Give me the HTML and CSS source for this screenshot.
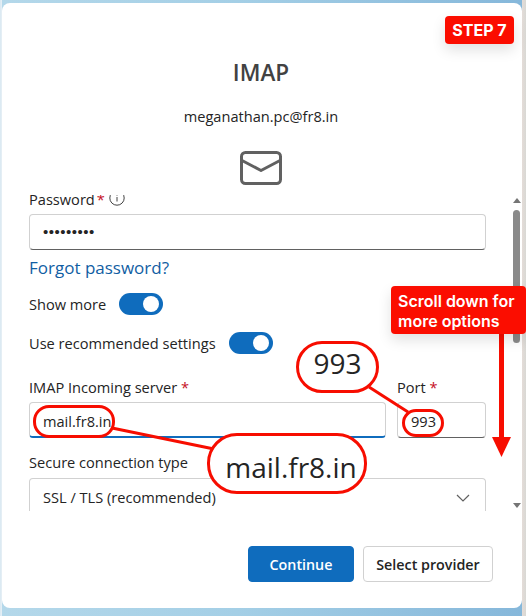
FILE: index.html
```html
<!DOCTYPE html>
<html lang="en">
<head>
<meta charset="utf-8">
<title>IMAP</title>
<link rel="stylesheet" href="styles.css">
</head>
<body>
<main class="card">
  <header class="head">
    <h1 class="title">IMAP</h1>
    <p class="email">meganathan.pc@fr8.in</p>
    <svg class="mail-icon" width="42" height="34" viewBox="0 0 42 34" fill="none" stroke="#616161" stroke-width="3" stroke-linejoin="round" stroke-linecap="round">
      <rect x="1.5" y="1.5" width="39" height="31" rx="4"/>
      <path d="M2 9.500 L21 19.500 L40 9.500"/>
    </svg>
  </header>
  <div class="scroll-row">
    <div class="form">
      <div class="label first">Password <span class="req">*</span>
        <svg class="info" width="16" height="16" viewBox="0 0 16 16" fill="none" stroke="#424242"><circle cx="8" cy="8" r="7.200"/><path d="M8 7v4.500M8 4.400v1.200"/></svg>
      </div>
      <div class="field pw">•••••••••</div>
      <a class="forgot" href="#">Forgot password?</a>
      <div class="toggle-row more"><span>Show more</span><span class="toggle"></span></div>
      <div class="toggle-row rec"><span>Use recommended settings</span><span class="toggle"></span></div>
      <div class="server-row">
        <div class="col grow">
          <div class="label">IMAP Incoming server <span class="req">*</span></div>
          <div class="field focus">mail.fr8.in</div>
        </div>
        <div class="col port">
          <div class="label">Port <span class="req">*</span></div>
          <div class="field">993</div>
        </div>
      </div>
      <div class="label secure">Secure connection type</div>
      <div class="field select">SSL / TLS (recommended)
        <svg class="chev" width="14" height="8" viewBox="0 0 14 8" fill="none" stroke="#616161" stroke-width="1.200"><path d="M1 1l6 6 6-6"/></svg>
      </div>
    </div>
    <div class="scrollbar">
      <span class="arrow up"></span>
      <span class="thumb"></span>
      <span class="arrow down"></span>
    </div>
  </div>
  <footer class="foot">
    <button class="btn primary" type="button">Continue</button>
    <button class="btn" type="button">Select provider</button>
  </footer>
</main>

<svg class="lines" width="526" height="616" viewBox="0 0 526 616" fill="none" stroke="#f70d00" stroke-width="3">
  <path d="M112 428 L214 449"/>
  <path d="M369 387 L408 412"/>
  <path d="M501.500 333 V438" stroke-width="5"/>
  <path d="M492 437 H511 L501.500 457 Z" fill="#f70d00" stroke="none"/>
</svg>
<div class="step">STEP 7</div>
<div class="note">Scroll down for<br>more options</div>
<div class="ring ring-mail"></div>
<div class="ring ring-port"></div>
<div class="bubble bubble-port">993</div>
<div class="bubble bubble-mail">mail.fr8.in</div>
</body>
</html>
```

FILE: styles.css
```css
* { box-sizing: border-box; }
html, body { margin: 0; height: 616px; overflow: hidden; }
body {
  position: relative;
  font-family: "Open Sans", "Noto Sans", sans-serif;
  color: #242424;
  padding: 3px 4px 8px 2px;
  background:
    linear-gradient(90deg, #d8e8f2 0, #e8f0f5 2px, transparent 2px),
    linear-gradient(90deg, transparent 522px, #e4dcd8 522px, #d8d8d4 526px),
    linear-gradient(90deg, #b4d8ea 0, #a4cfe6 45%, #85b7da 100%);
}
.card {
  height: 605px;
  background: #fff;
  border-radius: 8px;
  display: flex;
  flex-direction: column;
}
.head {
  height: 192px;
  display: flex;
  flex-direction: column;
  align-items: center;
  padding-right: 2px;
}
.title {
  margin: 56px 0 0;
  font-size: 22.500px;
  line-height: 28px;
  font-weight: 600;
  color: #424242;
}
.email {
  margin: 19px 0 0;
  font-size: 14.600px;
  line-height: 20px;
}
.mail-icon { margin-top: 25px; }
.scroll-row {
  height: 316px;
  display: flex;
  overflow: hidden;
}
.form {
  flex: 1;
  padding: 0 26px 0 27px;
  overflow: hidden;
}
.label {
  font-size: 14.600px;
  line-height: 18px;
  height: 20px;
}
.label.first { margin-top: -5px; display: flex; align-items: flex-start; gap: 2px; }
.req { color: #c50f1f; }
.info { margin-left: 2px; }
.field {
  position: relative;
  height: 36px;
  border: 1px solid #d1d1d1;
  border-bottom-color: #616161;
  border-radius: 4px;
  padding: 0 13px;
  font-size: 14.600px;
  line-height: 36px;
  margin-top: 4px;
}
.pw { letter-spacing: 0.5px; font-family: "Liberation Sans", sans-serif; font-size: 15px; line-height: 34px; }
.focus { border-bottom: 2px solid #0f6cbd; }
.forgot {
  display: block;
  margin-top: 7px;
  font-size: 17px;
  line-height: 22px;
  color: #115ea3;
  text-decoration: none;
}
.toggle-row {
  display: flex;
  align-items: center;
  gap: 13px;
  font-size: 14.600px;
  height: 22px;
}
.more { margin-top: 14px; }
.rec { margin-top: 17px; }
.toggle {
  position: relative;
  width: 44px;
  height: 22px;
  border-radius: 11px;
  background: #0f6cbd;
}
.toggle::after {
  content: "";
  position: absolute;
  right: 4px;
  top: 3px;
  width: 16px;
  height: 16px;
  border-radius: 50%;
  background: #fff;
}
.server-row { display: flex; gap: 11px; margin-top: 24px; }
.col.grow { flex: 1; }
.col.port { width: 89px; }
.secure { margin-top: 15px; }
.select { height: 50px; margin-top: 5px; border-bottom: 0; border-radius: 4px 4px 0 0; line-height: 36px; }
.chev { position: absolute; right: 15px; top: 15px; }
.scrollbar {
  width: 9px;
  margin-right: 1px;
  display: flex;
  flex-direction: column;
  align-items: center;
}
.thumb { width: 7px; height: 133px; border-radius: 4px; background: #8a8a8a; margin-top: 7px; }
.arrow { width: 0; height: 0; border-left: 4px solid transparent; border-right: 4px solid transparent; }
.arrow.up { border-bottom: 5px solid #757575; margin-top: 3px; }
.arrow.down { border-top: 5px solid #757575; margin-top: auto; margin-bottom: 3px; }
.foot {
  flex: 1;
  display: flex;
  justify-content: flex-end;
  align-items: flex-start;
  gap: 9px;
  padding: 35px 29px 0 0;
}
.btn {
  height: 36px;
  width: 130px;
  padding: 0;
  border: 1px solid #d1d1d1;
  border-radius: 4px;
  background: #fff;
  color: #242424;
  font: 600 14.300px "Open Sans", "Noto Sans", sans-serif;
}
.btn.primary { width: 106px; background: #0f6cbd; border-color: #0f6cbd; color: #fff; }
.lines { position: absolute; left: 0; top: 0; pointer-events: none; }
.step, .note {
  position: absolute;
  background: #fb0d00;
  color: #fff;
  font-family: Inter, Roboto, sans-serif;
  font-weight: 700;
  border-radius: 4px;
  box-shadow: 0 6px 14px rgba(0,0,0,.12);
}
.step { left: 445px; top: 16px; width: 69px; height: 28px; font-size: 16px; line-height: 28px; text-align: center; }
.note { left: 391px; top: 286px; width: 135px; height: 48px; padding: 5px 0 0 7px; font-size: 16px; font-weight: 600; line-height: 20px; }
.ring, .bubble { position: absolute; border: 3px solid #f70d00; }
.ring { border-radius: 16px; }
.ring-mail { left: 33px; top: 405px; width: 82px; height: 33px; }
.ring-port { left: 402px; top: 409px; width: 42px; height: 28px; border-radius: 14px; }
.bubble {
  background: #fff;
  text-align: center;
  color: #242424;
  font-size: 28px;
}
.bubble-port { left: 296px; top: 341px; width: 83px; height: 52px; border-radius: 26px; line-height: 38px; }
.bubble-mail { left: 207px; top: 433px; width: 160px; height: 61px; padding-left: 8px; border-radius: 30px; line-height: 62px; }
```
